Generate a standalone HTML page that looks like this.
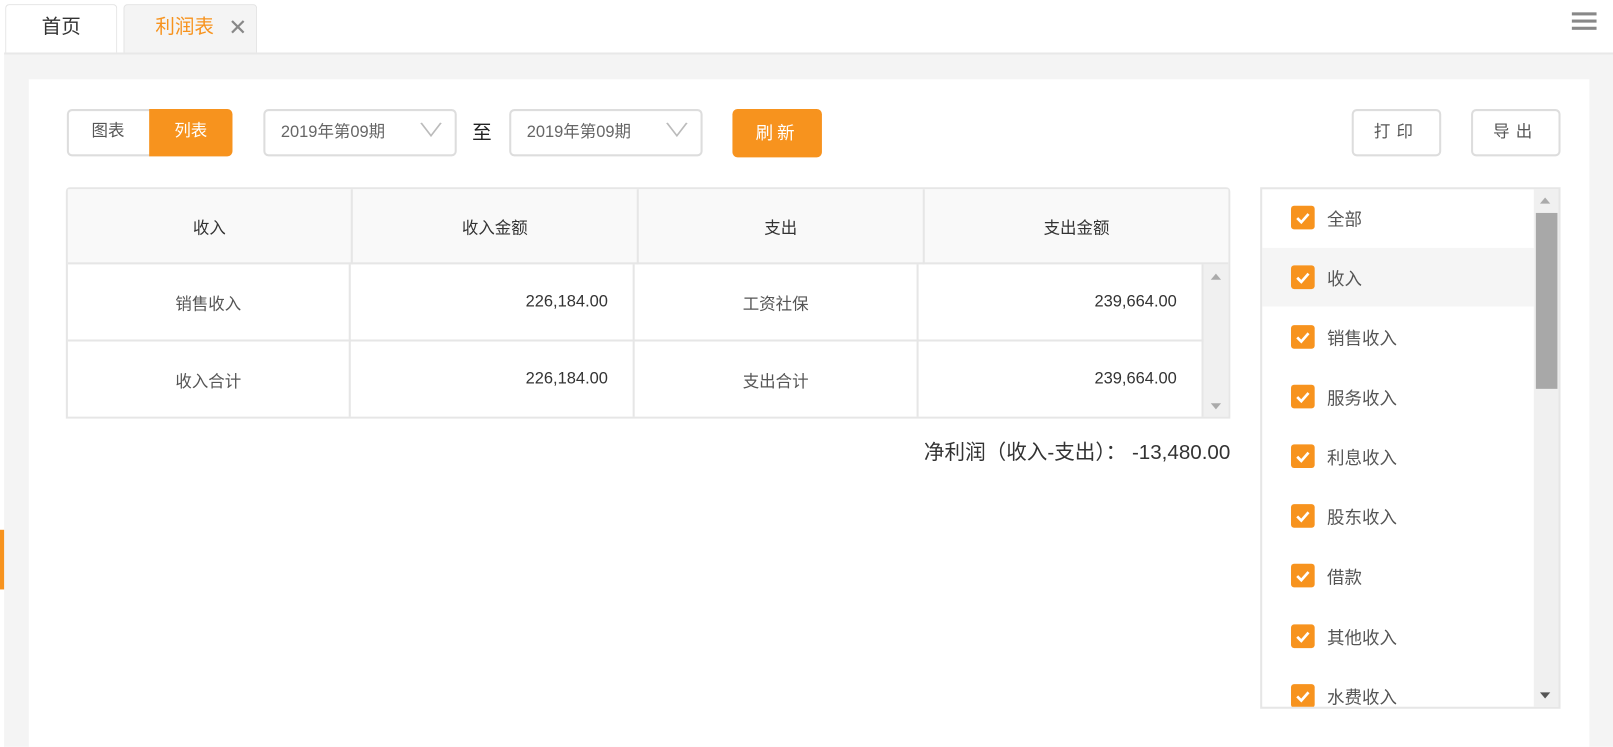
<!DOCTYPE html>
<html><head><meta charset="utf-8"><style>
*{box-sizing:border-box;margin:0;padding:0}
body{width:1613px;height:726px;background:#fff;font-family:"Liberation Sans","Noto Sans CJK SC",sans-serif;position:relative;overflow:hidden;color:#555}
#w{position:absolute;left:0;top:0;width:1568px;height:706px;transform:scale(1.0287);transform-origin:0 0}
.abs{position:absolute}
.tab{position:absolute;top:4px;height:48px;border:1px solid #e3e3e3;border-bottom:none;border-radius:4px 4px 0 0;font-size:19px;line-height:44px;text-align:center}
.btn{position:absolute;border:2px solid #ddd;border-radius:5px;background:#fff;font-size:16px;text-align:center;color:#555}
.cell{position:absolute;display:flex;align-items:center;justify-content:center;font-size:16px;color:#555}
.num{justify-content:flex-end;padding-right:24px;color:#333}
.item{position:absolute;left:1227px;width:264px;height:58px}
.cb{position:absolute;left:28px;top:18px;width:23px;height:23px;background:#f7931e;border-radius:3px}
.cb svg{position:absolute;left:4px;top:5px}
.item span{position:absolute;left:63px;top:17px;font-size:17px;color:#555}
</style></head><body><div id="w">
<div class="tab" style="left:5px;width:109px;background:#fff;color:#333">首页</div>
<div class="tab" style="left:120px;width:130px;background:#f4f4f4;color:#f7931e;text-align:left;padding-left:30px">利润表<span style="position:absolute;left:101px;top:0;color:#888;font-size:22px">✕</span></div>
<div class="abs" style="left:1528px;top:12px;width:24px;height:3px;background:#888;box-shadow:0 7px 0 #888,0 14px 0 #888"></div>
<div class="abs" style="left:4px;top:51px;width:1564px;height:675px;background:#f4f4f4;border-top:2px solid #e8e8e8"></div>
<div class="abs" style="left:0;top:515px;width:4px;height:58px;background:#f7931e"></div>
<div class="abs" style="left:28px;top:77px;width:1517px;height:649px;background:#fff"></div>

<div class="btn" style="left:65px;top:106px;width:160px;height:46px"></div>
<div class="abs" style="left:65px;top:106px;width:80px;height:46px;line-height:44px;text-align:center;font-size:16px;color:#555">图表</div>
<div class="abs" style="left:145px;top:106px;width:81px;height:46px;background:#f7931e;border-radius:0 5px 5px 0;line-height:44px;text-align:center;font-size:16px;color:#fff">列表</div>

<div class="btn" style="left:256px;top:106px;width:188px;height:46px;line-height:42px;text-align:left;padding-left:15px;color:#666">2019年第09期<span style="position:absolute;left:152px;top:-2px;color:#bbb;font-size:18px;transform:scaleX(1.5)">∨</span></div>
<div class="abs" style="left:459px;top:114px;font-size:19px;color:#222">至</div>
<div class="btn" style="left:495px;top:106px;width:188px;height:46px;line-height:42px;text-align:left;padding-left:15px;color:#666">2019年第09期<span style="position:absolute;left:152px;top:-2px;color:#bbb;font-size:18px;transform:scaleX(1.5)">∨</span></div>
<div class="abs" style="left:712px;top:106px;width:87px;height:47px;background:#f7931e;border-radius:5px;color:#fff;font-size:17px;line-height:47px;text-align:center;letter-spacing:4px">刷新</div>
<div class="btn" style="left:1314px;top:106px;width:87px;height:46px;line-height:42px;letter-spacing:6px">打印</div>
<div class="btn" style="left:1430px;top:106px;width:87px;height:46px;line-height:42px;letter-spacing:6px">导出</div>

<div class="abs" style="left:64px;top:182px;width:1132px;height:225px;border:2px solid #e6e6e6;border-radius:4px 4px 0 0;background:#fff"></div>
<div class="abs" style="left:66px;top:184px;width:1128px;height:73px;background:#f9f9f9;border-bottom:2px solid #e6e6e6"></div>
<div class="abs" style="left:341px;top:184px;width:2px;height:73px;background:#e6e6e6"></div>
<div class="abs" style="left:619px;top:184px;width:2px;height:73px;background:#e6e6e6"></div>
<div class="abs" style="left:897px;top:184px;width:2px;height:73px;background:#e6e6e6"></div>
<div class="cell" style="left:66px;top:184px;width:275px;height:71px;color:#333">收入</div>
<div class="cell" style="left:343px;top:184px;width:276px;height:71px;color:#333">收入金额</div>
<div class="cell" style="left:621px;top:184px;width:276px;height:71px;color:#333">支出</div>
<div class="cell" style="left:899px;top:184px;width:295px;height:71px;color:#333">支出金额</div>
<div class="abs" style="left:1170px;top:257px;width:24px;height:148px;background:#f0f0f0"></div>
<div class="abs" style="left:1177px;top:266px;border:5px solid transparent;border-bottom:6px solid #aaa;border-top:none"></div>
<div class="abs" style="left:1177px;top:392px;border:5px solid transparent;border-top:6px solid #aaa;border-bottom:none"></div>
<div class="abs" style="left:66px;top:330px;width:1104px;height:2px;background:#e6e6e6"></div>
<div class="abs" style="left:339px;top:257px;width:2px;height:148px;background:#e6e6e6"></div>
<div class="abs" style="left:615px;top:257px;width:2px;height:148px;background:#e6e6e6"></div>
<div class="abs" style="left:891px;top:257px;width:2px;height:148px;background:#e6e6e6"></div>
<div class="abs" style="left:1168px;top:257px;width:2px;height:148px;background:#e6e6e6"></div>
<div class="cell" style="left:66px;top:257px;width:273px;height:73px">销售收入</div>
<div class="cell num" style="left:341px;top:257px;width:274px;height:73px">226,184.00</div>
<div class="cell" style="left:617px;top:257px;width:274px;height:73px">工资社保</div>
<div class="cell num" style="left:893px;top:257px;width:275px;height:73px">239,664.00</div>
<div class="cell" style="left:66px;top:332px;width:273px;height:73px">收入合计</div>
<div class="cell num" style="left:341px;top:332px;width:274px;height:73px">226,184.00</div>
<div class="cell" style="left:617px;top:332px;width:274px;height:73px">支出合计</div>
<div class="cell num" style="left:893px;top:332px;width:275px;height:73px">239,664.00</div>
<div class="abs" style="left:700px;top:423px;width:496px;text-align:right;font-size:20px;color:#333">净利润（收入-支出）：&nbsp;-13,480.00</div>

<div class="abs" style="left:1225px;top:182px;width:292px;height:507px;border:2px solid #e6e6e6;background:#fff"></div>
<div class="abs" style="left:1227px;top:241px;width:264px;height:57px;background:#f5f5f5"></div>
<div class="abs" style="left:1491px;top:184px;width:24px;height:503px;background:#f0f0f0"></div>
<div class="abs" style="left:1493px;top:207px;width:21px;height:171px;background:#a8a8a8"></div>
<div class="abs" style="left:1497px;top:192px;border:5px solid transparent;border-bottom:6px solid #aaa;border-top:none"></div>
<div class="abs" style="left:1497px;top:673px;border:5px solid transparent;border-top:6px solid #555;border-bottom:none"></div>
<div class="abs" style="left:1227px;top:184px;width:264px;height:503px;overflow:hidden">
<div style="position:relative;left:-1227px;top:-184px">
<div class="item" style="top:182px"><div class="cb"><svg width="15" height="13"><path d="M2 7l4 4 7-8" stroke="#fff" stroke-width="2.6" fill="none"/></svg></div><span>全部</span></div>
<div class="item" style="top:240px"><div class="cb"><svg width="15" height="13"><path d="M2 7l4 4 7-8" stroke="#fff" stroke-width="2.6" fill="none"/></svg></div><span>收入</span></div>
<div class="item" style="top:298px"><div class="cb"><svg width="15" height="13"><path d="M2 7l4 4 7-8" stroke="#fff" stroke-width="2.6" fill="none"/></svg></div><span>销售收入</span></div>
<div class="item" style="top:356px"><div class="cb"><svg width="15" height="13"><path d="M2 7l4 4 7-8" stroke="#fff" stroke-width="2.6" fill="none"/></svg></div><span>服务收入</span></div>
<div class="item" style="top:414px"><div class="cb"><svg width="15" height="13"><path d="M2 7l4 4 7-8" stroke="#fff" stroke-width="2.6" fill="none"/></svg></div><span>利息收入</span></div>
<div class="item" style="top:472px"><div class="cb"><svg width="15" height="13"><path d="M2 7l4 4 7-8" stroke="#fff" stroke-width="2.6" fill="none"/></svg></div><span>股东收入</span></div>
<div class="item" style="top:530px"><div class="cb"><svg width="15" height="13"><path d="M2 7l4 4 7-8" stroke="#fff" stroke-width="2.6" fill="none"/></svg></div><span>借款</span></div>
<div class="item" style="top:589px"><div class="cb"><svg width="15" height="13"><path d="M2 7l4 4 7-8" stroke="#fff" stroke-width="2.6" fill="none"/></svg></div><span>其他收入</span></div>
<div class="item" style="top:647px"><div class="cb"><svg width="15" height="13"><path d="M2 7l4 4 7-8" stroke="#fff" stroke-width="2.6" fill="none"/></svg></div><span>水费收入</span></div>
</div></div>
</div></body></html>
